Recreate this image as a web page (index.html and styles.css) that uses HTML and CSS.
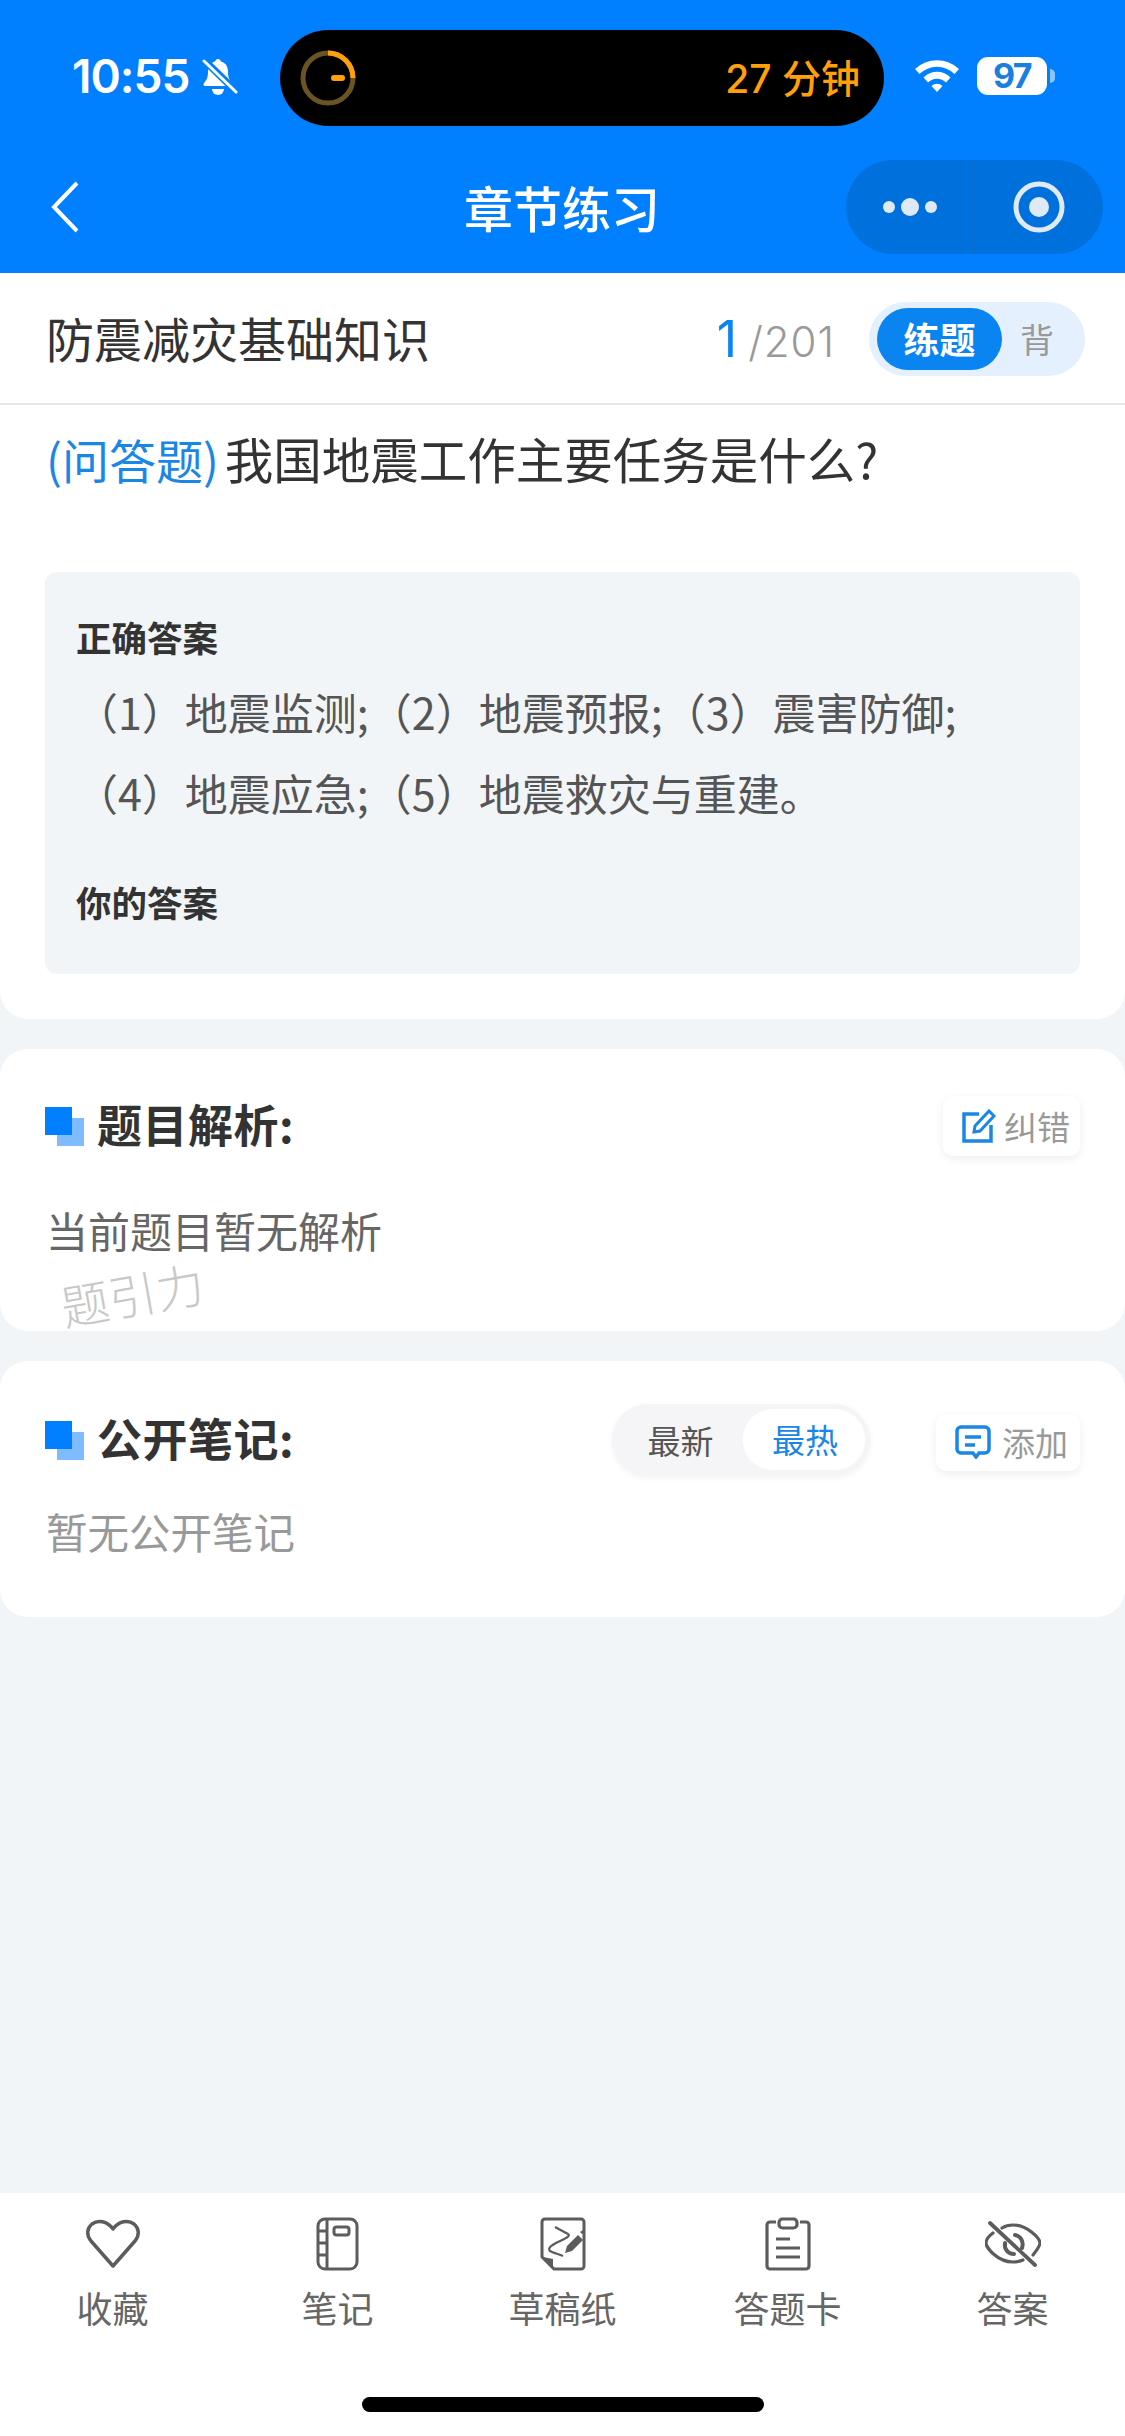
FILE: index.html
```html
<!DOCTYPE html>
<html lang="zh">
<head>
<meta charset="utf-8">
<title>章节练习</title>
<link rel="stylesheet" href="styles.css">
</head>
<body>

<div class="page">

    <!-- Blue top area -->
    <div class="top">
        <div class="status">
            <div class="time">10:55</div>
            <svg class="bell" width="36" height="38" viewBox="0 0 36 38">
                <path d="M16 1c-1.600 0-2.500 1-2.700 2.300C8 5 6 9 6 14c0 6-1.500 8-4 11-1 1.200-.5 3 1 3h26c1.500 0 2-1.800 1-3-2.500-3-4-5-4-11 0-5-2-9-7.300-10.700C18.500 2 17.600 1 16 1z" fill="#fff"/>
                <path d="M10 31a6 6 0 0 0 12 0z" fill="#fff"/>
                <path d="M4 1l32 31" stroke="#0080ff" stroke-width="3"/>
                <path d="M2 3l32 31" stroke="#0080ff" stroke-width="6"/>
                <path d="M2 3l32 31" stroke="#fff" stroke-width="3" stroke-linecap="round"/>
            </svg>
            <div class="island">
                <svg width="56" height="56" viewBox="0 0 56 56">
                    <circle cx="28" cy="28" r="25" fill="none" stroke="#6b5424" stroke-width="5"/>
                    <path d="M28 3a25 25 0 0 1 25 25" fill="none" stroke="#ff9f0a" stroke-width="5"/>
                    <path d="M34 28h8" stroke="#ff9f0a" stroke-width="6" stroke-linecap="round"/>
                </svg>
                <div class="island-text">27 分钟</div>
            </div>
            <svg class="wifi" width="48" height="36" viewBox="0 0 48 36">
                <path d="M2 12a32 32 0 0 1 44 0l-4.500 5a25 25 0 0 0-35 0z" fill="#fff"/>
                <path d="M10.500 20.500a19 19 0 0 1 27 0l-4.500 5a12.500 12.500 0 0 0-18 0z" fill="#fff"/>
                <path d="M18.500 29a8 8 0 0 1 11 0L24 35z" fill="#fff"/>
            </svg>
            <div class="battery">97</div>
            <div class="battery-nub"></div>
        </div>
        <div class="nav">
            <svg class="back" width="30" height="52" viewBox="0 0 30 52">
                <path d="M27 2L4 26l23 24" fill="none" stroke="#fff" stroke-width="4"/>
            </svg>
            <div class="nav-title">章节练习</div>
            <div class="capsule">
                <div class="capsule-part">
                    <svg width="56" height="20" viewBox="0 0 56 20">
                        <circle cx="7" cy="10" r="6" fill="#dfeaf6"/>
                        <circle cx="28" cy="10" r="9" fill="#dfeaf6"/>
                        <circle cx="49" cy="10" r="6" fill="#dfeaf6"/>
                    </svg>
                </div>
                <div class="capsule-part capsule-right">
                    <svg width="52" height="52" viewBox="0 0 52 52">
                        <circle cx="26" cy="26" r="23" fill="none" stroke="#dfeaf6" stroke-width="5"/>
                        <circle cx="26" cy="26" r="10" fill="#dfeaf6"/>
                    </svg>
                </div>
            </div>
        </div>
    </div>

    <!-- Chapter name and counter -->
    <div class="sub">
        <div class="sub-title">防震减灾基础知识</div>
        <div class="counter"><span class="counter-now">1</span><span class="counter-all">/201</span></div>
        <div class="mode">
            <div class="mode-on">练题</div>
            <div class="mode-off">背</div>
        </div>
    </div>

    <!-- Question and answer -->
    <div class="card question-card">
        <div class="question"><span class="question-type">(问答题)</span>我国地震工作主要任务是什么?</div>
        <div class="answer">
            <div class="answer-label">正确答案</div>
            <div class="answer-line">（1）地震监测;（2）地震预报;（3）震害防御;</div>
            <div class="answer-line">（4）地震应急;（5）地震救灾与重建。</div>
            <div class="answer-label answer-mine">你的答案</div>
        </div>
    </div>

    <!-- Analysis -->
    <div class="card analysis-card">
        <div class="card-head">
            <div class="mark"></div>
            <div class="card-title">题目解析:</div>
            <div class="small-btn">
                <svg width="34" height="34" viewBox="0 0 34 34" fill="none" stroke="#1a86e5" stroke-width="3.500">
                    <path d="M17 5H2v27h27V16"/>
                    <path d="M12 23l1-6L27 2l5 5-14 15z" stroke-width="3"/>
                </svg>
                <span>纠错</span>
            </div>
        </div>
        <div class="analysis-text">当前题目暂无解析</div>
        <div class="watermark">题引力</div>
    </div>

    <!-- Public notes -->
    <div class="card notes-card">
        <div class="card-head">
            <div class="mark"></div>
            <div class="card-title">公开笔记:</div>
            <div class="sort">
                <div class="sort-off">最新</div>
                <div class="sort-on">最热</div>
            </div>
            <div class="small-btn add-btn">
                <svg width="36" height="34" viewBox="0 0 36 34" fill="none" stroke="#1a86e5" stroke-width="3.500">
                    <path d="M6 2h24a4 4 0 0 1 4 4v18a4 4 0 0 1-4 4h-6l-3 4-3-4H6a4 4 0 0 1-4-4V6a4 4 0 0 1 4-4z"/>
                    <path d="M10 12h16M10 20h10"/>
                </svg>
                <span>添加</span>
            </div>
        </div>
        <div class="notes-text">暂无公开笔记</div>
    </div>

    <!-- Bottom bar -->
    <div class="tabbar">
        <div class="tabs">
            <div class="tab">
                <svg width="56" height="54" viewBox="0 0 56 54" fill="none" stroke="#5c5c5c" stroke-width="3.500" stroke-linejoin="round">
                    <path d="M28 49L6 24C1 18 2 11 7 7c6-4.500 15-3 21 5 6-8 15-9.500 21-5 5 4 6 11 1 17z"/>
                </svg>
                <div class="tab-name">收藏</div>
            </div>
            <div class="tab">
                <svg width="44" height="54" viewBox="0 0 44 54" fill="none" stroke="#5c5c5c" stroke-width="3">
                    <rect x="2" y="2" width="39" height="50" rx="7"/>
                    <path d="M11 2v50M2 14h9M2 26h9M2 38h9"/>
                    <rect x="18" y="10" width="15" height="8" rx="2.500"/>
                </svg>
                <div class="tab-name">笔记</div>
            </div>
            <div class="tab">
                <svg width="46" height="54" viewBox="0 0 46 54" fill="none" stroke="#5c5c5c" stroke-width="3">
                    <path d="M5 2h36a3 3 0 0 1 3 3v44a3 3 0 0 1-3 3H14L2 40V5a3 3 0 0 1 3-3z"/>
                    <path d="M3 40l10 2v9z" fill="#5c5c5c" stroke="none"/>
                    <path d="M15 10l13 7c3 2-2 4-10 8-6 3-11 6-8 9 3 2 9 3 13 5" stroke-width="2.200"/>
                    <path d="M25 36l2-7 11-11 5 5-11 11z" fill="#5c5c5c" stroke="none"/>
                    <path d="M40 15l3-2 1 3-2 1z" fill="#5c5c5c" stroke="none"/>
                </svg>
                <div class="tab-name">草稿纸</div>
            </div>
            <div class="tab">
                <svg width="46" height="54" viewBox="0 0 46 54" fill="none" stroke="#5c5c5c" stroke-width="3.200">
                    <path d="M11 5H5a3 3 0 0 0-3 3v41a3 3 0 0 0 3 3h36a3 3 0 0 0 3-3V8a3 3 0 0 0-3-3h-6"/>
                    <rect x="14" y="2" width="18" height="9" rx="3.500"/>
                    <path d="M11 22h14M11 31h24M11 40h24"/>
                </svg>
                <div class="tab-name">答题卡</div>
            </div>
            <div class="tab">
                <svg width="56" height="54" viewBox="0 -5 56 54" fill="none" stroke="#5c5c5c" stroke-width="3.200" stroke-linecap="round">
                    <path d="M8 11C4 14 1 18 1 21c0 4 11 19 27 19 4 0 7-.5 10-2"/>
                    <path d="M17 6c3-2 7-3 11-3 15 0 27 14 27 18 0 3-3 7-7 12"/>
                    <path d="M30 13c6 1 9 7 7 13" stroke-width="4"/>
                    <path d="M20 21c-1 6 3 11 9 11" stroke-width="4"/>
                    <path d="M5 1l45 42" stroke-width="3.800"/>
                </svg>
                <div class="tab-name">答案</div>
            </div>
        </div>
        <div class="home-bar"></div>
    </div>

</div>

</body>
</html>
```

FILE: styles.css
```css
* {
    box-sizing: border-box;
}

body {
    margin: 0;
    font-family: "Noto Sans CJK SC", "Noto Sans", sans-serif;
    background-color: #f2f5f8;
}

.page {
    width: 1125px;
    height: 2436px;
    display: flex;
    flex-direction: column;
    overflow: hidden;
}

/* Blue top area */
.top {
    height: 273px;
    background-color: #0080ff;
    color: #fff;
}

.status {
    height: 152px;
    padding: 30px 0 26px 72px;
    display: flex;
    align-items: center;
}

.time {
    width: 130px;
    margin-bottom: 5px;
    font-family: Inter, "Liberation Sans", sans-serif;
    font-size: 46px;
    font-weight: 600;
    letter-spacing: -1px;
}

.bell {
    flex: none;
    margin-bottom: 2px;
}

.island {
    width: 604px;
    height: 96px;
    margin-left: 42px;
    padding: 0 24px 0 20px;
    border-radius: 48px;
    background-color: #000;
    display: flex;
    align-items: center;
    justify-content: space-between;
}

.island-text {
    margin-bottom: 4px;
    font-family: Inter, "Noto Sans CJK SC", sans-serif;
    font-size: 39px;
    font-weight: 500;
    color: #ff9f0a;
}

.wifi {
    flex: none;
    margin: 0 0 6px 29px;
}

.battery {
    width: 70px;
    height: 38px;
    margin: 0 0 4px 16px;
    border-radius: 11px;
    background-color: #fff;
    font-family: Inter, "Liberation Sans", sans-serif;
    font-size: 34px;
    font-weight: 700;
    letter-spacing: -1.500px;
    line-height: 38px;
    text-align: center;
    color: #1a7fe0;
}

.battery-nub {
    width: 5px;
    height: 14px;
    margin: 0 0 4px 3px;
    border-radius: 0 5px 5px 0;
    background-color: #8cc4ff;
}

.nav {
    height: 121px;
    padding: 0 22px 11px 50px;
    display: flex;
    align-items: center;
}

.back {
    flex: none;
}

.nav-title {
    flex: 1;
    margin-bottom: 2px;
    padding-left: 198px;
    font-size: 49px;
    font-weight: 500;
    text-align: center;
}

.capsule {
    width: 257px;
    height: 94px;
    border-radius: 47px;
    background-color: #0070dc;
    display: flex;
}

.capsule-part {
    width: 128px;
    display: flex;
    align-items: center;
    justify-content: center;
}

.capsule-right {
    width: 129px;
    border-left: 1px solid #0a6ccb;
}

/* Chapter name and counter */
.sub {
    height: 132px;
    padding: 3px 40px 2px 46px;
    border-bottom: 2px solid #e6e6e6;
    background-color: #fff;
    display: flex;
    align-items: center;
}

.sub-title {
    flex: 1;
    font-size: 48px;
    line-height: 66px;
    margin-top: -3px;
    color: #333;
}

.counter {
    margin-right: 34px;
    font-family: Inter, "Liberation Sans", sans-serif;
}

.counter-now {
    font-size: 50px;
    color: #0a84f0;
}

.counter-all {
    margin-left: 11px;
    font-size: 42px;
    font-weight: 300;
    letter-spacing: 1px;
    color: #999;
}

.mode {
    width: 216px;
    height: 74px;
    padding: 5px 5px 5px 8px;
    border-radius: 37px;
    background-color: #e4f0fd;
    display: flex;
    align-items: center;
}

.mode-on {
    width: 125px;
    height: 62px;
    border-radius: 31px;
    background-color: #0a84f0;
    font-size: 36px;
    font-weight: 700;
    line-height: 60px;
    text-align: center;
    color: #fff;
}

.mode-off {
    margin-left: 18px;
    font-size: 34px;
    color: #999;
}

/* Cards */
.card {
    position: relative;
    background-color: #fff;
    border-radius: 0 0 28px 28px;
}

.question-card {
    height: 614px;
    padding: 0 45px;
}

.question {
    height: 167px;
    padding: 18px 0 0 1px;
    font-size: 48.500px;
    line-height: 70px;
    color: #333;
}

.question-type {
    margin-right: 6px;
    font-size: 47px;
    color: #1a86e5;
}

.answer {
    height: 402px;
    padding: 38px 30px 0 31px;
    border-radius: 12px;
    background-color: #f2f5f8;
}

.answer-label {
    margin-bottom: 7px;
    font-size: 35.500px;
    font-weight: 700;
    line-height: 54px;
    color: #333;
}

.answer-line {
    margin-left: -1px;
    font-size: 43px;
    line-height: 81px;
    color: #555;
}

.answer-mine {
    margin-top: 42px;
}

.analysis-card,
.notes-card {
    margin-top: 30px;
    padding: 0 45px;
    border-radius: 28px;
}

.analysis-card {
    height: 282px;
    padding-top: 46px;
}

.notes-card {
    height: 256px;
    padding-top: 48px;
}

.card-head {
    height: 62px;
    display: flex;
    align-items: center;
}

.mark {
    position: relative;
    width: 39px;
    height: 39px;
    flex: none;
}

.mark::before,
.mark::after {
    content: "";
    position: absolute;
    width: 27px;
    height: 28px;
}

.mark::before {
    right: 0;
    bottom: 0;
    background-color: #7fbcff;
}

.mark::after {
    left: 0;
    top: 0;
    background-color: #0080ff;
}

.card-title {
    flex: 1;
    margin: 0 0 6px 13px;
    font-size: 45px;
    font-weight: 700;
    letter-spacing: 0.5px;
    color: #333;
}

.small-btn {
    width: 137px;
    height: 60px;
    padding-left: 19px;
    border-radius: 10px;
    background-color: #fff;
    box-shadow: 0 3px 10px rgba(0, 0, 0, 0.07);
    display: flex;
    align-items: center;
    gap: 8px;
    font-size: 33px;
    color: #999;
}

.add-btn {
    width: 144px;
    height: 57px;
    margin-top: 4px;
    gap: 11px;
}

.sort {
    width: 258px;
    height: 72px;
    margin-right: 66px;
    padding: 5px 5px 6px 6px;
    border-radius: 36px;
    background-color: #f5f5f7;
    box-shadow: 0 2px 6px rgba(0, 0, 0, 0.05);
    display: flex;
    align-items: center;
    font-size: 33px;
}

.sort-off {
    width: 125px;
    text-align: center;
    color: #555;
}

.sort-on {
    width: 122px;
    height: 61px;
    padding-left: 2px;
    border-radius: 30px;
    background-color: #fff;
    line-height: 60px;
    text-align: center;
    color: #1a86e5;
}

.analysis-text {
    margin-top: 43px;
    padding-left: 1px;
    font-size: 42px;
    line-height: 60px;
    color: #666;
}

.watermark {
    position: absolute;
    left: 60px;
    top: 214px;
    font-size: 48px;
    font-weight: 300;
    line-height: 60px;
    color: #c8c8c8;
    transform: rotate(-10deg);
}

.notes-text {
    margin-top: 30px;
    padding-left: 1px;
    font-size: 41.500px;
    line-height: 60px;
    color: #999;
}

/* Bottom bar */
.tabbar {
    height: 243px;
    margin-top: auto;
    background-color: #fff;
}

.tabs {
    height: 204px;
    padding-top: 24px;
    display: flex;
}

.tab {
    width: 225px;
    display: flex;
    flex-direction: column;
    align-items: center;
}

.tab svg {
    height: 54px;
}

.tab-name {
    margin-top: 11px;
    font-size: 36px;
    line-height: 50px;
    color: #666;
}

.home-bar {
    width: 402px;
    height: 15px;
    margin: 0 auto;
    border-radius: 8px;
    background-color: #000;
}
```
